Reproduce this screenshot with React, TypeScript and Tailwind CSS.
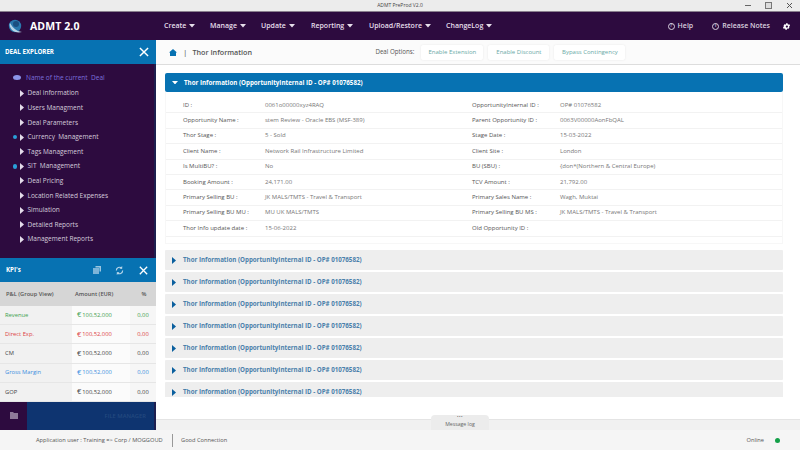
import React from "react";

const Caret = ({ className = "" }: { className?: string }) => (
  <svg width="6" height="3.500" viewBox="0 0 7 4" className={className}><path d="M0 0h7L3.500 4z" fill="currentColor" /></svg>
);
const Tri = ({ color = "#e4dcea" }: { color?: string }) => (
  <svg width="4" height="7" viewBox="0 0 4 7" className="shrink-0"><path d="M0 0l4 3.500L0 7z" fill={color} /></svg>
);
const Close = ({ size = 11 }: { size?: number }) => (
  <svg width={size} height={size} viewBox="0 0 11 11"><path d="M1 1l9 9M10 1l-9 9" stroke="#fff" strokeWidth="1.600" /></svg>
);

const nav = ["Create", "Manage", "Update", "Reporting", "Upload/Restore", "ChangeLog"];
const navW = ["w-[46px]", "w-[51px]", "w-[50px]", "w-[58px]", "w-[77px]", "w-[60px]"];
const tree: [string, boolean][] = [
  ["Deal information", false], ["Users Managment", false], ["Deal Parameters", false], ["Currency  Management", true],
  ["Tags Management", false], ["SIT  Management", true], ["Deal Pricing", false], ["Location Related Expenses", false],
  ["Simulation", false], ["Detailed Reports", false], ["Management Reports", false],
];
const kpis = [
  ["Revenue", "text-[#3fa14f]"], ["Direct Exp.", "text-[#dc3f45]"], ["CM", "text-[#444]"], ["Gross Margin", "text-[#3b8fe0]"], ["GOP", "text-[#444]"],
];
const rows = [
  ["ID :", "0061o00000xyz4RAQ", "OpportunityInternal ID :", "OP# 01076582"],
  ["Opportunity Name :", "stem Review - Oracle EBS (MSF-389)", "Parent Opportunity ID :", "0063V00000AonFbQAL"],
  ["Thor Stage :", "5 - Sold", "Stage Date :", "15-03-2022"],
  ["Client Name :", "Network Rail Infrastructure Limited", "Client Site :", "London"],
  ["Is MultiBU? :", "No", "BU (SBU) :", "{don*(Northern & Central Europe)"],
  ["Booking Amount :", "24,171.00", "TCV Amount :", "21,792.00"],
  ["Primary Selling BU :", "JK MALS/TMTS - Travel & Transport", "Primary Sales Name :", "Wagh, Muktai"],
  ["Primary Selling BU MU :", "MU UK MALS/TMTS", "Primary Selling BU MS :", "JK MALS/TMTS - Travel & Transport"],
  ["Thor Info update date :", "15-06-2022", "Old Opportunity ID :", ""],
];
const title = "Thor Information (OpportunityInternal ID - OP# 01076582)";

export default function App() {
  return (
    <div className="w-[800px] h-[450px] overflow-hidden flex flex-col bg-white text-[#444] font-['Open_Sans','Noto_Sans',sans-serif]">
      {/* title bar */}
      <div className="h-3 shrink-0 bg-[#ececec] border-b border-[#8a7f8f] relative flex items-center justify-center text-[5px] text-[#444]">
        ADMT PreProd V2.0
        <div className="absolute right-[7px] top-0 h-[11px] flex items-center gap-[14px]">
          <div className="w-[6px] h-px bg-[#666]" />
          <div className="w-[7px] h-[7px] border border-[#777] bg-[#ddd]" />
          <svg width="7" height="7" viewBox="0 0 7 7"><path d="M1 1l5 5M6 1l-5 5" stroke="#555" strokeWidth="1" /></svg>
        </div>
      </div>
      {/* nav */}
      <div className="h-[28px] shrink-0 bg-[#2d0b3f] flex items-center text-white">
        <div className="w-[164px] pl-[8px] flex items-center shrink-0">
          <svg width="15" height="15" viewBox="0 0 15 15" className="shrink-0"><circle cx="7" cy="7" r="6.200" fill="#2a78ad" /><path d="M2 4c3 5 6 8 12 9-4 1-8 0-10-2S1 6 2 4z" fill="#b6d4e8" /><circle cx="8" cy="5" r="3" fill="#1b4f80" /></svg>
          <span className="ml-[7px] text-[10.500px] font-bold leading-none tracking-[0.1px]">ADMT 2.0</span>
        </div>
        <div className="flex items-center text-[7px] font-semibold text-[#e6dfeb]">
          {nav.map((n, i) => (
            <div key={n} className={`flex items-center gap-[3px] whitespace-nowrap ${navW[i]}`}>
              {n}<Caret />
            </div>
          ))}
        </div>
        <div className="ml-auto flex items-center text-[7px] font-semibold text-[#d9d0df]">
          <span className="w-[7px] h-[7px] rounded-full border border-[#d9d0df] text-[5px] flex items-center justify-center mr-[3px]">?</span>Help
          <span className="w-[7px] h-[7px] rounded-full border border-[#d9d0df] text-[5px] flex items-center justify-center ml-[19px] mr-[3px]">i</span>Release Notes
          <svg width="9" height="9" viewBox="0 0 24 24" className="ml-[12px] mr-[9px]"><path fill="#fff" d="M19.400 13a7.500 7.500 0 000-2l2.100-1.600-2-3.500-2.500 1a7.500 7.500 0 00-1.700-1L15 3.200h-4l-.4 2.700a7.500 7.500 0 00-1.700 1l-2.500-1-2 3.500L4.500 11a7.500 7.500 0 000 2l-2.100 1.600 2 3.500 2.500-1a7.500 7.500 0 001.700 1l.4 2.700h4l.4-2.700a7.500 7.500 0 001.700-1l2.500 1 2-3.500zM13 15a3 3 0 110-6 3 3 0 010 6z" /></svg>
        </div>
      </div>
      {/* body */}
      <div className="flex-1 flex min-h-0">
        {/* sidebar */}
        <div className="w-[156px] shrink-0 flex flex-col">
          <div className="h-[24px] shrink-0 bg-[#0772b2] flex items-center justify-between pl-[5px] pr-[7px] text-white text-[6.200px] font-bold">
            DEAL EXPLORER<Close size={10} />
          </div>
          <div className="h-[194px] shrink-0 bg-[#2d0b3f] border-r-[2px] border-[#1d1f4f] pt-[7px] text-[6.500px] font-medium text-[#d5cbdc]">
            <div className="flex items-center h-[13px] pl-[13px] text-[#7b6fdc]">
              <svg width="8" height="5" viewBox="0 0 8 5" className="mr-[5px]"><ellipse cx="4" cy="2.500" rx="4" ry="2.500" fill="#8c95e8" /></svg>
              Name of the current&nbsp; Deal
            </div>
            <div className="mt-[2px]">
              {tree.map(([t, dot]) => (
                <div key={t} className="flex items-center h-[14.600px] pl-[12.500px] whitespace-pre">
                  <span className={`w-[4.500px] h-[4.500px] rounded-full mr-[3px] ${dot ? "bg-[#2a9fd8]" : ""}`} />
                  <Tri />
                  <span className="ml-[3.500px]">{t}</span>
                </div>
              ))}
            </div>
          </div>
          <div className="h-[24px] shrink-0 bg-[#0772b2] flex items-center pl-[6px] pr-[8px] text-white text-[6.200px] font-bold">
            KPI's
            <div className="ml-auto flex items-center">
              <svg width="8" height="8" viewBox="0 0 8 8" className="mr-[14px]"><path d="M2.500 0H8v5.500H6.500V1.500h-4z" fill="#9cc5df" /><path d="M0 2h6v6H0z" fill="#7db4d8" /></svg>
              <svg width="9" height="9" viewBox="0 0 10 10" className="mr-[15px]"><path d="M1.500 5a3.500 3.500 0 016-2.500M8.500 5a3.500 3.500 0 01-6 2.500" stroke="#b7d6ea" strokeWidth="1.300" fill="none" /><path d="M8 0v3H5zM2 10V7h3z" fill="#b7d6ea" /></svg>
              <Close size={9} />
            </div>
          </div>
          <div className="h-[24px] shrink-0 bg-[#d6d6d6] flex items-center text-[5.700px] font-semibold text-[#555]">
            <div className="w-[72px] pl-[6px]">P&amp;L (Group View)</div>
            <div className="w-[60px] pl-[3px]">Amount (EUR)</div>
            <div className="flex-1 text-center">%</div>
          </div>
          {kpis.map(([k, c]) => (
            <div key={k} className={`h-[19.200px] shrink-0 flex items-center text-[5.800px] border-b border-[#e6e6e6] ${c}`}>
              <div className="w-[72px] h-full flex items-center pl-[5px] bg-[#f1f1f1]">{k}</div>
              <div className="w-[58px] h-full flex items-center pl-[5px] bg-[#fbfbfb] whitespace-nowrap"><span className="text-[7.500px] leading-none mr-[1px]">€</span>100,52,000</div>
              <div className="flex-1 h-full flex items-center justify-center bg-[#f6f6f6]">0,00</div>
            </div>
          ))}
          <div className="h-[28px] shrink-0 flex border-r-[2px] border-[#1d1f4f]">
            <div className="w-[27px] bg-[#2d0b3f] flex items-center justify-center">
              <svg width="8" height="7" viewBox="0 0 8 7"><path d="M0 0h3l1 1h4v6H0z" fill="#8e7a99" /></svg>
            </div>
            <div className="flex-1 bg-[#0e3470] flex items-center justify-end pr-[8px] text-[5.800px] font-semibold text-[#23497f]">FILE MANAGER</div>
          </div>
        </div>
        {/* main */}
        <div className="flex-1 min-w-0 flex flex-col">
          <div className="h-[25px] shrink-0 border-b border-[#ddd] bg-[#fbfbfb] flex items-center pl-[13px]">
            <svg width="8" height="7" viewBox="0 0 8 7"><path d="M4 0l4 3.500H7V7H1V3.500H0z" fill="#0772b2" /></svg>
            <span className="ml-[6px] mr-[5px] text-[8px] text-[#555]">|</span>
            <span className="text-[7.200px] text-[#555] font-semibold w-[183px]">Thor Information</span>
            <span className="w-[46px] text-[6.200px] font-medium text-[#555] whitespace-nowrap">Deal Options:</span>
            <div className="flex gap-[5px] text-[6px] text-[#6aa9a6]">
              <div className="w-[62px] h-[15px] bg-white flex items-center justify-center rounded-[2px] shadow-[0_0_2px_#e4e4e4]">Enable Extension</div>
              <div className="w-[61px] h-[15px] bg-white flex items-center justify-center rounded-[2px] shadow-[0_0_2px_#e4e4e4]">Enable Discount</div>
              <div className="w-[71px] h-[15px] bg-white flex items-center justify-center rounded-[2px] shadow-[0_0_2px_#e4e4e4]">Bypass Contingency</div>
            </div>
          </div>
          <div className="flex-1 min-h-0 overflow-hidden pt-[8px] pl-[9px] pr-[17px]">
            <div className="h-[19px] bg-[#0772b2] rounded-[2px] flex items-center pl-[7px] text-white text-[6.200px] font-bold">
              <Caret /><span className="ml-[6px]">{title}</span>
            </div>
            <div className="h-[152px] pt-[6px] border-x border-b border-[#f7f7f7]">
              {rows.map((r) => (
                <div key={r[0]} className="h-[15.400px] flex items-center border-b border-[#f2f2f2] text-[6px]">
                  <div className="w-[82px] ml-[17px] font-medium text-[#555] whitespace-nowrap">{r[0]}</div>
                  <div className="w-[207px] text-[#777] whitespace-nowrap">{r[1]}</div>
                  <div className="w-[88px] font-medium text-[#555] whitespace-nowrap">{r[2]}</div>
                  <div className="text-[#777] whitespace-nowrap">{r[3]}</div>
                </div>
              ))}
            </div>
            <div className="mt-[6px] h-[147px] overflow-hidden flex flex-col gap-[2px]">
              {[0, 1, 2, 3, 4, 5, 6].map((i) => (
                <div key={i} className="h-5 shrink-0 bg-[#eeeeee] flex items-center pl-[7px] rounded-[1px] text-[6.200px] font-bold text-[#4a80ab]">
                  <Tri color="#0a5f9e" /><span className="ml-[7px]">{title}</span>
                </div>
              ))}
            </div>
          </div>
          <div className="relative h-[11px] shrink-0 bg-[#f1f1f1] border-t border-[#e4e4e4]">
            <div className="absolute left-[275px] -top-[5px] w-[58px] h-[15px] bg-[#ececec] rounded-t-[4px] flex flex-col items-center text-[5.200px] text-[#666] leading-[6px]">
              <span className="h-[5px] leading-[4px] text-[4px] tracking-[0.5px]">•••</span>
              <span className="mt-[1px]">Message log</span>
            </div>
          </div>
        </div>
      </div>
      {/* footer */}
      <div className="h-5 shrink-0 bg-[#f5f5f5] flex items-center text-[5.700px] text-[#555] relative">
        <span className="ml-[36px] w-[136px] whitespace-nowrap">Application user : Training =&gt; Corp / MOGGOUD</span>
        <div className="w-px h-[13px] bg-[#999]" />
        <span className="ml-[8px]">Good Connection</span>
        <span className="ml-auto">Online</span>
        <span className="w-[5px] h-[5px] rounded-full bg-[#14a049] ml-[11px] mr-[20px]" />
      </div>
    </div>
  );
}
